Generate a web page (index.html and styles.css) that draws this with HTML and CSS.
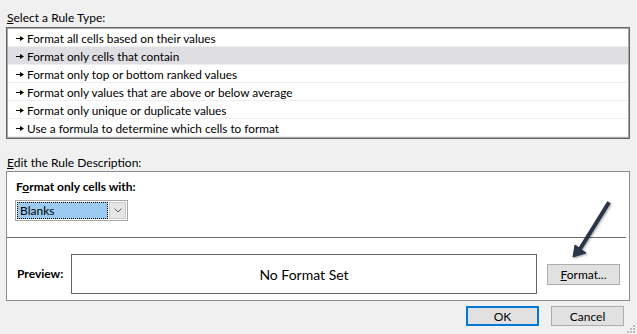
FILE: index.html
```html
<!DOCTYPE html>
<html>
<head>
  <title>New Formatting Rule</title>
  <link rel="stylesheet" href="styles.css">
</head>
<body>
  <div class="dialog">
    <div class="group-label"><u>S</u>elect a Rule Type:</div>
    <ul class="rule-list">
      <li class="rule"><svg class="bullet" viewBox="0 0 8 5"><path d="M0 2h4v-2l4 2.5-4 2.5v-2h-4z"/></svg>Format all cells based on their values</li>
      <li class="rule selected"><svg class="bullet" viewBox="0 0 8 5"><path d="M0 2h4v-2l4 2.5-4 2.5v-2h-4z"/></svg>Format only cells that contain</li>
      <li class="rule"><svg class="bullet" viewBox="0 0 8 5"><path d="M0 2h4v-2l4 2.5-4 2.5v-2h-4z"/></svg>Format only top or bottom ranked values</li>
      <li class="rule"><svg class="bullet" viewBox="0 0 8 5"><path d="M0 2h4v-2l4 2.5-4 2.5v-2h-4z"/></svg>Format only values that are above or below average</li>
      <li class="rule"><svg class="bullet" viewBox="0 0 8 5"><path d="M0 2h4v-2l4 2.5-4 2.5v-2h-4z"/></svg>Format only unique or duplicate values</li>
      <li class="rule"><svg class="bullet" viewBox="0 0 8 5"><path d="M0 2h4v-2l4 2.5-4 2.5v-2h-4z"/></svg>Use a formula to determine which cells to format</li>
    </ul>

    <div class="group-label spaced"><u>E</u>dit the Rule Description:</div>
    <div class="desc-box">
      <div class="desc-top">
        <div class="sub-label">F<u>o</u>rmat only cells with:</div>
        <div class="combo">
          <div class="combo-value"><span class="focus">Blanks</span></div>
          <div class="combo-btn">
            <svg viewBox="0 0 8 5" class="chev"><path d="M0.5 0.5l3.5 3.5 3.5-3.5" fill="none" stroke="#555" stroke-width="1"/></svg>
          </div>
        </div>
      </div>
      <div class="separator"></div>
      <div class="preview-row">
        <div class="sub-label preview-label">Preview:</div>
        <div class="preview-box">No Format Set</div>
        <button class="btn format-btn"><u>F</u>ormat...</button>
      </div>
    </div>

    <div class="actions">
      <button class="btn default">OK</button>
      <button class="btn">Cancel</button>
    </div>
  </div>

  <svg class="callout" width="637" height="334" viewBox="0 0 637 334">
    <defs>
      <filter id="soft" x="-20%" y="-20%" width="140%" height="140%">
        <feDropShadow dx="1" dy="1" stdDeviation="1" flood-color="#000" flood-opacity="0.35"/>
      </filter>
    </defs>
    <g filter="url(#soft)" fill="#2b3447" stroke="#2b3447">
      <line x1="608" y1="204" x2="580" y2="249" stroke-width="4" stroke-linecap="square"/>
      <polygon points="573,257 575,245 586,253" stroke-width="1" stroke-linejoin="round"/>
    </g>
  </svg>

  <svg class="grip" width="10" height="10" viewBox="0 0 10 10">
    <g fill="#bcbcbc">
      <rect x="7" y="1" width="2" height="2"/>
      <rect x="4" y="4" width="2" height="2"/>
      <rect x="7" y="4" width="2" height="2"/>
      <rect x="1" y="7" width="2" height="2"/>
      <rect x="4" y="7" width="2" height="2"/>
      <rect x="7" y="7" width="2" height="2"/>
    </g>
  </svg>
</body>
</html>
```

FILE: styles.css
```css
body { background: #f0f0f0; margin: 0; font-family: Lato, 'Noto Sans', Arial, sans-serif; font-size: 12px; color: #000; width: 637px; height: 334px; overflow: hidden; position: relative; }
.dialog { padding: 10px 7px 0 6px; }
.group-label { line-height: 16px; padding-left: 1px; }
.group-label.spaced { margin-top: 16px; }

.rule-list { list-style: none; margin: 1px 0 0 0; padding: 0; width: 620px; background: #fff; border: 1px solid #646464; box-shadow: inset 0 0 0 1px #a8a8a8; padding: 1px; }
.rule { height: 16px; padding-top: 1px; line-height: 17px; border-bottom: 1px solid #efefef; display: flex; align-items: center; padding-left: 8px; font-size: 11.8px; }
.rule.selected { background: #dfdee3; }
.bullet { width: 8px; height: 5px; margin-right: 3px; fill: #000; }

.desc-box { background: #fff; border: 1px solid #8c8c96; width: 622px; height: 128px; }
.desc-top { padding: 7px 0 0 8px; }
.sub-label { font-weight: bold; line-height: 16px; padding-left: 1px; }
.combo { display: flex; margin-top: 5px; width: 111px; height: 19px; border: 1px solid #a6a6a6; background: #fff; }
.combo-value { flex: 1; padding: 1px; }
.focus { display: block; height: 15px; line-height: 15px; background: #9dcaf0; border: 1px dotted #000; padding-left: 2px; }
.combo-btn { width: 17px; margin: 1px 1px 1px 0; background: #e6e6e6; border: 1px solid #cacaca; box-sizing: border-box; display: flex; align-items: center; justify-content: center; }
.chev { width: 8px; height: 5px; }

.separator { height: 1px; background: #6a6a6a; margin: 16px 3px 0 0; }

.preview-row { display: flex; align-items: center; margin-top: 16px; padding-left: 9px; }
.preview-label { width: 54px; }
.preview-box { width: 464px; height: 38px; border: 1px solid #646464; display: flex; align-items: center; justify-content: center; font-size: 14px; }
.btn { font-family: inherit; font-size: 12px; color: #000; background: #e1e1e1; border: 1px solid #adadad; width: 73px; height: 20px; padding: 0; margin: 0; }
.format-btn { margin-left: 10px; height: 21px; }

.actions { display: flex; justify-content: flex-end; gap: 12px; margin-top: 5px; padding-right: 6px; }
.btn.default { border: 2px solid #0078d7; }

.callout { position: absolute; left: 0; top: 0; pointer-events: none; }
.grip { position: absolute; right: 1px; bottom: 0; }
```
